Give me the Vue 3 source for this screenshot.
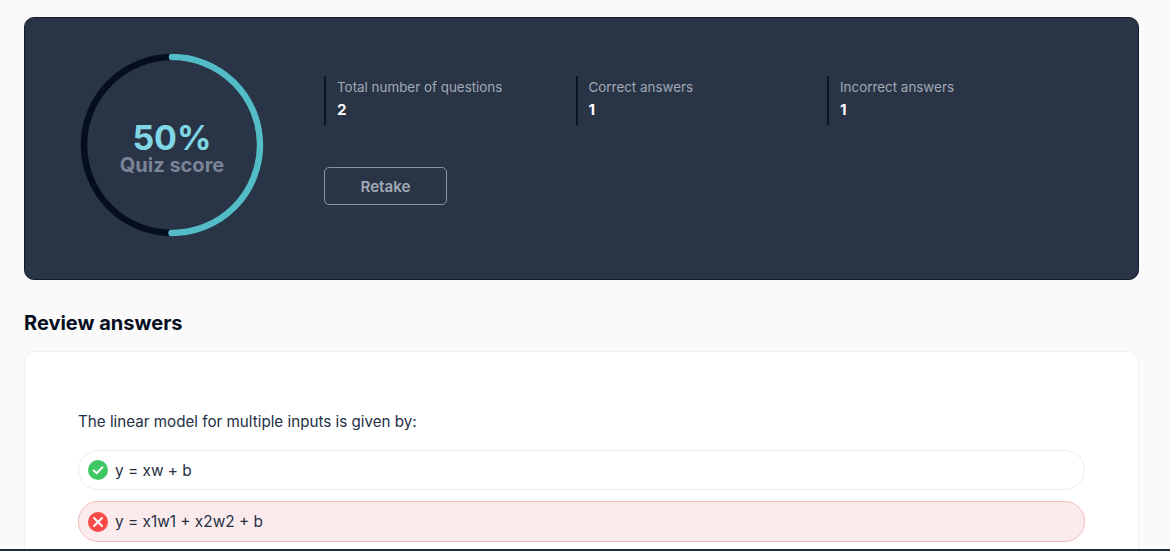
<template>
  <div class="page">
    <div class="content">
      <section class="result-panel">
        <div class="ring">
          <svg width="184" height="184" viewBox="0 0 184 184">
            <circle cx="92" cy="92" r="88" fill="none" stroke="#050d20" stroke-width="6.5" />
            <circle
              cx="92"
              cy="92"
              r="88"
              fill="none"
              stroke="#53bcc6"
              stroke-width="6.5"
              stroke-linecap="round"
              :stroke-dasharray="`${arc} 1000`"
              transform="rotate(-90 92 92)"
            />
          </svg>
          <div class="ring-text">
            <div class="percent">{{ score }}%</div>
            <div class="ring-label">Quiz score</div>
          </div>
        </div>
        <div class="summary">
          <div class="stats">
            <div v-for="stat in stats" :key="stat.label" class="stat">
              <div class="stat-label">{{ stat.label }}</div>
              <div class="stat-value">{{ stat.value }}</div>
            </div>
          </div>
          <button class="retake">Retake</button>
        </div>
      </section>

      <h2 class="review-title">Review answers</h2>

      <section class="review-card">
        <p class="question">The linear model for multiple inputs is given by:</p>
        <div class="option">
          <svg class="option-icon" width="20" height="20" viewBox="0 0 20 20">
            <circle cx="10" cy="10" r="10" fill="#3fc763" />
            <path d="M5.6 10.4l3 2.9 5.8-6" fill="none" stroke="#fff" stroke-width="2" stroke-linecap="round" stroke-linejoin="round" />
          </svg>
          <span>y = xw + b</span>
        </div>
        <div class="option wrong">
          <svg class="option-icon" width="20" height="20" viewBox="0 0 20 20">
            <circle cx="10" cy="10" r="10" fill="#f94848" />
            <path d="M6 6l8 8M14 6l-8 8" fill="none" stroke="#fff" stroke-width="2" stroke-linecap="round" />
          </svg>
          <span>y = x1w1 + x2w2 + b</span>
        </div>
      </section>
    </div>
    <div class="bottom-edge"></div>
  </div>
</template>

<script setup>
const score = 50
const arc = (2 * Math.PI * 88 * score) / 100

const stats = [
  { label: 'Total number of questions', value: 2 },
  { label: 'Correct answers', value: 1 },
  { label: 'Incorrect answers', value: 1 }
]
</script>

<style>
html,
body {
  margin: 0;
  overflow: hidden;
}
</style>

<style scoped>
.page {
  height: 551px;
  display: flex;
  flex-direction: column;
  overflow: hidden;
  background-color: #fafafa;
  font-family: Inter, "Liberation Sans", sans-serif;
}

.content {
  flex: 1;
  min-height: 0;
  overflow: hidden;
  padding: 17px 31px 0 24px;
}

.bottom-edge {
  height: 2px;
  flex-shrink: 0;
  background-color: #1f2a3a;
}

.result-panel {
  height: 263px;
  box-sizing: border-box;
  padding: 35px 0 0 55px;
  display: flex;
  gap: 60px;
  background-color: #2a3447;
  border: 1px solid #141c2c;
  border-radius: 10px;
}

.ring {
  width: 184px;
  height: 184px;
  flex-shrink: 0;
  position: relative;
}

.ring svg {
  display: block;
}

.ring-text {
  position: absolute;
  inset: 0;
  padding-top: 4px;
  display: flex;
  flex-direction: column;
  align-items: center;
  justify-content: center;
}

.percent {
  font-size: 34px;
  line-height: 35px;
  font-weight: 700;
  color: #80d6e4;
}

.ring-label {
  font-size: 20px;
  line-height: 20px;
  font-weight: 700;
  color: #7a8496;
}

.summary {
  flex: 1;
  padding-top: 23px;
}

.stats {
  display: grid;
  grid-template-columns: repeat(3, 251.5px);
}

.stat {
  height: 49px;
  box-sizing: border-box;
  padding: 1px 0 0 11px;
  border-left: 2px solid #0b1324;
}

.stat-label {
  font-size: 13.4px;
  line-height: 20px;
  color: #a1a9b5;
}

.stat-value {
  margin-top: 1px;
  font-size: 15.2px;
  line-height: 24px;
  font-weight: 700;
  color: #ffffff;
}

.retake {
  display: block;
  margin-top: 42px;
  width: 123px;
  height: 38px;
  padding: 0;
  background: transparent;
  border: 1px solid #8a93a3;
  border-radius: 5px;
  font-family: inherit;
  font-size: 15.2px;
  font-weight: 600;
  color: #a1a9b5;
}

.review-title {
  margin: 31px 0 16px;
  font-size: 20px;
  line-height: 24px;
  font-weight: 700;
  color: #050d20;
}

.review-card {
  height: 220px;
  box-sizing: border-box;
  padding: 58px 53px 0;
  background-color: #ffffff;
  border: 1px solid #f1f1f3;
  border-radius: 10px;
}

.question {
  margin: 0 0 16px;
  font-size: 15.2px;
  line-height: 24px;
  color: #253044;
}

.option {
  height: 40px;
  box-sizing: border-box;
  margin-bottom: 11px;
  padding-left: 9px;
  display: flex;
  align-items: center;
  gap: 7px;
  background-color: #ffffff;
  border: 1px solid #ececee;
  border-radius: 20px;
  font-size: 15.4px;
  color: #253044;
}

.option.wrong {
  height: 41px;
  background-color: #fcebec;
  border-color: #f2bcbc;
}

.option-icon {
  flex-shrink: 0;
}
</style>
